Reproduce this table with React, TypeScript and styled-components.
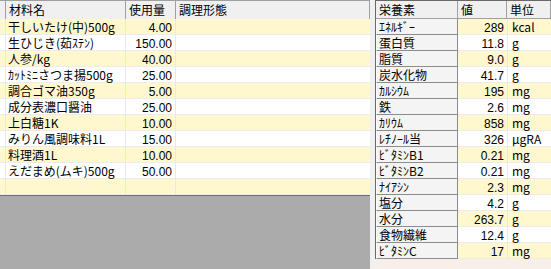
import React from "react";
import styled, { createGlobalStyle } from "styled-components";

const GlobalStyle = createGlobalStyle`
  html, body { margin: 0; padding: 0; background: #f0f0f0; }
  body { font-family: "Noto Sans CJK JP", sans-serif; font-size: 12px; color: #000; }
`;

type Ingredient = { name: string; amount: string; form: string };
type Nutrient = { name: string; value: string; unit: string };

const ingredients: Ingredient[] = [
  { name: "干しいたけ(中)500g", amount: "4.00", form: "" },
  { name: "生ひじき(茹ｽﾃﾝ)", amount: "150.00", form: "" },
  { name: "人参/kg", amount: "40.00", form: "" },
  { name: "ｶｯﾄﾐﾆさつま揚500g", amount: "25.00", form: "" },
  { name: "調合ゴマ油350g", amount: "5.00", form: "" },
  { name: "成分表濃口醤油", amount: "25.00", form: "" },
  { name: "上白糖1K", amount: "10.00", form: "" },
  { name: "みりん風調味料1L", amount: "15.00", form: "" },
  { name: "料理酒1L", amount: "10.00", form: "" },
  { name: "えだまめ(ムキ)500g", amount: "50.00", form: "" },
  { name: "", amount: "", form: "" },
];

const nutrients: Nutrient[] = [
  { name: "ｴﾈﾙｷﾞｰ", value: "289", unit: "kcal" },
  { name: "蛋白質", value: "11.8", unit: "g" },
  { name: "脂質", value: "9.0", unit: "g" },
  { name: "炭水化物", value: "41.7", unit: "g" },
  { name: "ｶﾙｼｳﾑ", value: "195", unit: "mg" },
  { name: "鉄", value: "2.6", unit: "mg" },
  { name: "ｶﾘｳﾑ", value: "858", unit: "mg" },
  { name: "ﾚﾁﾉｰﾙ当", value: "326", unit: "μgRA" },
  { name: "ﾋﾞﾀﾐﾝB1", value: "0.21", unit: "mg" },
  { name: "ﾋﾞﾀﾐﾝB2", value: "0.21", unit: "mg" },
  { name: "ﾅｲｱｼﾝ", value: "2.3", unit: "mg" },
  { name: "塩分", value: "4.2", unit: "g" },
  { name: "水分", value: "263.7", unit: "g" },
  { name: "食物繊維", value: "12.4", unit: "g" },
  { name: "ﾋﾞﾀﾐﾝC", value: "17", unit: "mg" },
];

const YELLOW = "#fff8cf";

const Window = styled.div`
  display: flex;
  width: 551px;
  height: 269px;
  overflow: hidden;
`;

const LeftPane = styled.div`
  width: 370px;
  flex: none;
  display: flex;
  flex-direction: column;
  background: #ababab;
`;

const Splitter = styled.div`
  width: 5px;
  flex: none;
  background: #f0f0f0;
`;

const RightPane = styled.div`
  flex: 1;
  background: #f8f0e8;
  display: flex;
  flex-direction: column;
`;

const IngredientGrid = styled.div`
  display: grid;
  grid-template-columns: 6px 120px 50px 1fr;
  border-top: 1px solid #a0a0a0;
  border-bottom: 1px solid #6e6e78;
`;

const HeadCell = styled.div`
  height: 18px;
  box-sizing: border-box;
  background: #f0f0f0;
  border-right: 1px solid #a0a0a0;
  padding-left: 3px;
  line-height: 17px;
  white-space: nowrap;
  &:last-child { border-right: none; }
`;

const Cell = styled.div<{ $odd: boolean; $num?: boolean }>`
  height: 16px;
  box-sizing: border-box;
  background: ${(p) => (p.$odd ? YELLOW : "#ffffff")};
  border-right: 1px solid #e8e8e8;
  border-bottom: 1px solid #ececec;
  line-height: 15px;
  padding: ${(p) => (p.$num ? "0 3px 0 0" : "0 0 0 2px")};
  text-align: ${(p) => (p.$num ? "right" : "left")};
  white-space: nowrap;
  &:nth-child(4n) { border-right: none; }
`;

const Num = styled.span`
  font-family: "Liberation Sans Narrow", "Arial Narrow", "Liberation Sans", sans-serif;
  font-size: 12px;
`;

const NutrientGrid = styled.div`
  display: grid;
  grid-template-columns: 82px 49px 1fr;
  border-left: 1px solid #696969;
  border-top: 1px solid #696969;
  background: #ffffff;
`;

const NHead = styled.div`
  height: 18px;
  box-sizing: border-box;
  background: #f0f0f0;
  border-right: 1px solid #a0a0a0;
  border-bottom: 1px solid #a0a0a0;
  padding-left: 3px;
  line-height: 17px;
  white-space: nowrap;
  &:last-child { border-right: none; }
`;

const NameCell = styled.div`
  height: 16px;
  box-sizing: border-box;
  background: #f4f4f4;
  border-right: 1px solid #8c8c8c;
  border-bottom: 1px solid #8c8c8c;
  border-left: 1px solid #ffffff;
  padding-left: 2px;
  line-height: 15px;
  white-space: nowrap;
`;

const ValueCell = styled.div<{ $odd: boolean }>`
  height: 16px;
  box-sizing: border-box;
  background: ${(p) => (p.$odd ? YELLOW : "#ffffff")};
  border-bottom: 1px solid #ececec;
  line-height: 15px;
  padding-right: 3px;
  text-align: right;
  white-space: nowrap;
`;

const UnitCell = styled.div<{ $odd: boolean }>`
  height: 16px;
  box-sizing: border-box;
  background: ${(p) => (p.$odd ? YELLOW : "#ffffff")};
  border-bottom: 1px solid #ececec;
  border-left: 1px solid #e8e8e8;
  line-height: 15px;
  padding-left: 4px;
  white-space: nowrap;
`;

export default function App() {
  return (
    <>
      <GlobalStyle />
      <Window>
        <LeftPane>
          <IngredientGrid>
            <HeadCell />
            <HeadCell>材料名</HeadCell>
            <HeadCell>使用量</HeadCell>
            <HeadCell>調理形態</HeadCell>
            {ingredients.map((r, i) => (
              <React.Fragment key={i}>
                <Cell $odd={i % 2 === 0} />
                <Cell $odd={i % 2 === 0}>{r.name}</Cell>
                <Cell $odd={i % 2 === 0} $num>
                  <Num>{r.amount}</Num>
                </Cell>
                <Cell $odd={i % 2 === 0}>{r.form}</Cell>
              </React.Fragment>
            ))}
          </IngredientGrid>
        </LeftPane>
        <Splitter />
        <RightPane>
          <NutrientGrid>
            <NHead>栄養素</NHead>
            <NHead>値</NHead>
            <NHead>単位</NHead>
            {nutrients.map((n, i) => (
              <React.Fragment key={n.name}>
                <NameCell>{n.name}</NameCell>
                <ValueCell $odd={i % 2 === 0}>
                  <Num>{n.value}</Num>
                </ValueCell>
                <UnitCell $odd={i % 2 === 0}>{n.unit}</UnitCell>
              </React.Fragment>
            ))}
          </NutrientGrid>
        </RightPane>
      </Window>
    </>
  );
}
